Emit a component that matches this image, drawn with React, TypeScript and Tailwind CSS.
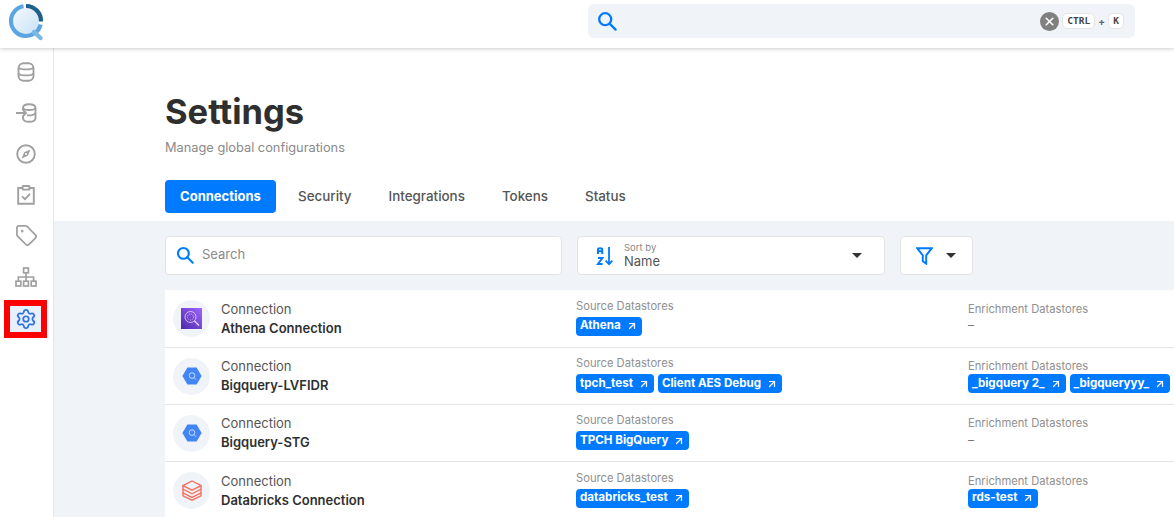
import { ArrowUpRight, Settings, Tag, X } from "lucide-react";

const font = { fontFamily: '"Inter", "Noto Sans", sans-serif' };
const mono = { fontFamily: '"DejaVu Sans Mono", monospace' };

function LogoMark() {
  return (
    <svg width="38" height="40" viewBox="0 0 38 40" fill="none">
      <defs>
        <linearGradient id="lg" x1="0" y1="0" x2="1" y2="1">
          <stop offset="0" stopColor="#f3f9fe" />
          <stop offset="1" stopColor="#c9e1f6" />
        </linearGradient>
      </defs>
      <circle cx="19" cy="19" r="13" fill="url(#lg)" />
      <path d="M19 4 A15 15 0 0 1 34 19.5" stroke="#1f5f8b" strokeWidth="4.2" />
      <path d="M33.6 22.5 A15 15 0 1 1 16.5 4.2" stroke="#5ba6e0" strokeWidth="4.2" />
      <path d="M27 30 L33.5 36" stroke="#7ab8e8" strokeWidth="4.4" strokeLinecap="round" />
    </svg>
  );
}

function SearchGlyph({ size }: { size: number }) {
  return (
    <svg width={size} height={size} viewBox="0 0 20 20" fill="none" stroke="#007bff" strokeWidth="2.3">
      <circle cx="8.2" cy="8.2" r="6" />
      <path d="M12.6 12.6L18.6 18.6" strokeLinecap="round" />
    </svg>
  );
}

function SortIcon() {
  return (
    <svg width="18" height="20" viewBox="0 0 18 20" fill="none" stroke="#007bff">
      <path d="M2 8V3.2C2 1.8 6.2 1.8 6.2 3.2V8M2 5.2H6.2" strokeWidth="2" />
      <path d="M2 12H6.4L2 18H6.6" strokeWidth="2" />
      <path d="M13 1V18M9.6 14.6L13 18.2L16.4 14.6" strokeWidth="1.8" />
    </svg>
  );
}

function FilterIcon() {
  return (
    <svg width="17" height="18" viewBox="0 0 17 18" fill="none" stroke="#007bff" strokeWidth="1.9">
      <path d="M1.2 1.2H15.8L10.2 8.4V16.6L6.8 14.2V8.4Z" />
    </svg>
  );
}

function Caret() {
  return <span className="h-0 w-0 border-x-[5px] border-t-[5px] border-x-transparent border-t-[#333333]" />;
}

function AthenaIcon() {
  return (
    <svg width="21" height="21" viewBox="0 0 21 21" fill="none">
      <defs>
        <linearGradient id="ath" x1="0" y1="1" x2="1" y2="0">
          <stop offset="0" stopColor="#4d27a8" />
          <stop offset="1" stopColor="#a166ff" />
        </linearGradient>
      </defs>
      <rect width="21" height="21" fill="url(#ath)" />
      <circle cx="9.5" cy="9" r="5.5" stroke="#e6dcfa" strokeWidth="0.8" />
      <circle cx="9.5" cy="9" r="3" stroke="#e6dcfa" strokeWidth="0.8" strokeDasharray="1 1" />
      <path d="M13.5 13L18 17.5" stroke="#e6dcfa" strokeWidth="1.2" />
    </svg>
  );
}

function BigQueryIcon() {
  return (
    <svg width="20" height="18" viewBox="0 0 20 18" fill="none">
      <path d="M5.4 0.5H14.6L19.6 9L14.6 17.5H5.4L0.4 9Z" fill="#4285f4" />
      <circle cx="10" cy="8.6" r="2.8" stroke="#c5d9fb" strokeWidth="1" />
      <path d="M12 10.6L14 12.6" stroke="#c5d9fb" strokeWidth="1" />
    </svg>
  );
}

function DatabricksIcon() {
  return (
    <svg width="20" height="21" viewBox="0 0 20 21" fill="none" stroke="#f2715f" strokeWidth="1.4">
      <path d="M10 1L19 5.6L10 10.2L1 5.6Z" />
      <path d="M1 9.2L10 13.8L19 9.2" />
      <path d="M1 12.8L10 17.4L19 12.8" />
      <path d="M1 6V15.8L10 20.2L19 15.8V6" />
    </svg>
  );
}

const gray = "#a0a0a0";

function DbIcon() {
  return (
    <svg width="18" height="20" viewBox="0 0 18 20" fill="none" stroke={gray} strokeWidth="1.9">
      <rect x="1.5" y="1.2" width="15" height="17.6" rx="5" />
      <path d="M1.5 5.6C4 8 14 8 16.5 5.6M1.5 11.6C4 14 14 14 16.5 11.6" />
    </svg>
  );
}

function IngestIcon() {
  return (
    <svg width="22" height="20" viewBox="0 0 22 20" fill="none" stroke={gray} strokeWidth="1.9">
      <path d="M8 7V5C8 2.4 10.5 1.2 14 1.2S20.5 2.4 20.5 5V15C20.5 17.6 17.5 18.8 14 18.8S8 17.6 8 15V13" />
      <path d="M8 5C9 7.6 19.5 7.6 20.5 5M12 12.2C15 12.8 19.5 12 20.5 10" />
      <path d="M1 10H11M7.5 6.4L11 10L7.5 13.6" />
    </svg>
  );
}

function CompassIcon() {
  return (
    <svg width="20" height="20" viewBox="0 0 20 20" fill="none">
      <circle cx="10" cy="10" r="8.8" stroke={gray} strokeWidth="1.9" />
      <path d="M14.4 5.6L11.8 11.8L5.6 14.4L8.2 8.2Z" fill={gray} />
      <circle cx="10" cy="10" r="1" fill="#ffffff" />
    </svg>
  );
}

function ClipboardIcon() {
  return (
    <svg width="18" height="20" viewBox="0 0 18 20" fill="none" stroke={gray} strokeWidth="1.9">
      <path d="M5.5 3H1.2V18.8H16.8V3H12.5" />
      <rect x="5.6" y="1" width="6.8" height="3.6" rx="0.6" />
      <path d="M5 11.4L8 14.2L13 8.8" />
    </svg>
  );
}

function SitemapIcon() {
  return (
    <svg width="22" height="20" viewBox="0 0 22 20" fill="none" stroke={gray} strokeWidth="1.7">
      <rect x="8.6" y="1" width="4.8" height="4.8" />
      <rect x="1" y="14.2" width="4.8" height="4.8" />
      <rect x="8.6" y="14.2" width="4.8" height="4.8" />
      <rect x="16.2" y="14.2" width="4.8" height="4.8" />
      <path d="M11 5.8V14.2M3.4 14.2V10H18.6V14.2" />
    </svg>
  );
}

function Chip({ label }: { label: string }) {
  return (
    <span className="flex h-[19px] items-center gap-[5px] rounded-[4px] bg-[#007bff] px-1 text-[11.6px] font-bold text-white">
      {label}
      <ArrowUpRight size={12} strokeWidth={2.4} />
    </span>
  );
}

function Datastores({ title, items, enrich }: { title: string; items: string[]; enrich?: boolean }) {
  return (
    <div className={enrich ? "flex flex-col pb-[4px] pt-[3px]" : "flex flex-col pb-[4px]"}>
      <span className="text-[11.2px] leading-[16px] text-[#8f8f8f]">{title}</span>
      <div className={enrich ? "flex h-[19px] items-center gap-1" : "mt-[3px] flex h-[19px] items-center gap-1"}>
        {items.length === 0 ? <span className="-mt-[2px] text-[12px] text-[#777777]">–</span> : items.map((i) => <Chip key={i} label={i} />)}
      </div>
    </div>
  );
}

const rows = [
  { name: "Athena Connection", icon: <AthenaIcon />, src: ["Athena"], enr: [], h: "h-[58px]" },
  { name: "Bigquery-LVFIDR", icon: <BigQueryIcon />, src: ["tpch_test", "Client AES Debug"], enr: ["_bigquery 2_", "_bigqueryyy_"], h: "h-[57px]" },
  { name: "Bigquery-STG", icon: <BigQueryIcon />, src: ["TPCH BigQuery"], enr: [], h: "h-[57px]" },
  { name: "Databricks Connection", icon: <DatabricksIcon />, src: ["databricks_test"], enr: ["rds-test"], h: "h-[58px]" },
];

export default function App() {
  const sideIcons = [
    <DbIcon key="a" />,
    <IngestIcon key="b" />,
    <CompassIcon key="c" />,
    <ClipboardIcon key="d" />,
    <Tag key="e" size={23} strokeWidth={1.8} />,
    <SitemapIcon key="f" />,
  ];
  return (
    <div style={font} className="flex h-[517px] w-full flex-col overflow-hidden bg-white">
      <header className="relative z-10 flex h-[48px] shrink-0 items-center justify-between bg-white pb-[6px] pl-[7px] pr-[39px] shadow-[0_1px_4px_rgba(0,0,0,0.2)]">
        <span className="mt-[2px]"><LogoMark /></span>
        <div className="flex h-[34px] w-[547px] items-center justify-between rounded-[6px] bg-[#f0f4f8] pl-[9px] pr-[11px]">
          <SearchGlyph size={20} />
          <div className="flex items-center gap-[3px]">
            <span className="flex h-[19px] w-[19px] items-center justify-center rounded-full bg-[#808080]">
              <X size={13} strokeWidth={3} color="#ffffff" />
            </span>
            <span style={mono} className="flex h-[16px] w-[33px] items-center justify-center rounded-[5px] border border-[#e5e5e5] bg-white text-[9.5px] font-bold text-[#444444]">CTRL</span>
            <span className="text-[10px] font-bold text-[#666666]">+</span>
            <span style={mono} className="flex h-[16px] w-[16px] items-center justify-center rounded-[5px] border border-[#e5e5e5] bg-white text-[9.5px] font-bold text-[#444444]">K</span>
          </div>
        </div>
      </header>
      <div className="flex min-h-0 flex-1">
        <aside className="flex w-[54px] shrink-0 flex-col items-center gap-[16px] border-r border-[#e5e5e5] pr-px pt-[11px] text-[#a0a0a0]">
          {sideIcons.map((ic) => (
            <span key={ic.key} className="flex h-[25px] w-[25px] items-center justify-center">{ic}</span>
          ))}
          <span className="-ml-px -mt-[5px] flex h-[38px] w-[43px] items-center justify-center border-[6px] border-[#ff0000] bg-[#e8f0fb] text-[#2f6fe8]">
            <Settings size={22} strokeWidth={1.9} />
          </span>
        </aside>
        <main className="min-w-0 flex-1 overflow-hidden">
          <div className="h-[173px] pl-[111px] pt-[43px]">
            <h1 className="text-[34.5px] font-bold leading-[41px] text-[#2f2f2f]">Settings</h1>
            <p className="mt-[7px] text-[12.8px] leading-[18px] text-[#8a8a8a]">Manage global configurations</p>
            <nav className="mt-[23px] flex items-center text-[13.4px] font-medium text-[#555555]">
              <span className="flex h-[33px] w-[111px] items-center justify-center rounded-[4px] bg-[#007bff] text-[13px] font-bold text-white">Connections</span>
              <span className="ml-[22px]">Security</span>
              <span className="ml-[37px]">Integrations</span>
              <span className="ml-[37px]">Tokens</span>
              <span className="ml-[37px]">Status</span>
            </nav>
          </div>
          <div className="h-full bg-[#f0f4f8] pl-[111px] pt-[15px]">
            <div className="flex gap-[15px]">
              <div className="flex h-[39px] w-[397px] items-center gap-[8px] rounded-[4px] border border-[#e3e3e3] bg-white pb-px pl-[10px] text-[13px] text-[#8a8a8a]">
                <SearchGlyph size={18} />
                Search
              </div>
              <div className="flex h-[39px] w-[308px] items-center rounded-[4px] border border-[#e3e3e3] bg-white pl-[18px] pr-[22px]">
                <SortIcon />
                <div className="ml-[10px] flex flex-1 flex-col">
                  <span className="text-[9.5px] leading-[11px] text-[#8a8a8a]">Sort by</span>
                  <span className="text-[13px] leading-[16px] text-[#555555]">Name</span>
                </div>
                <Caret />
              </div>
              <div className="flex h-[39px] w-[73px] items-center gap-[13px] rounded-[4px] border border-[#e3e3e3] bg-white pl-[15px]">
                <FilterIcon />
                <Caret />
              </div>
            </div>
            <div className="mt-[15px] flex flex-col bg-white">
              {rows.map((r) => (
                <div key={r.name} className={`flex items-center border-b border-[#e5e5e5] pl-[8px] ${r.h}`}>
                  <span className="flex h-[37px] w-[37px] shrink-0 items-center justify-center rounded-full bg-[#f0f4f8]">{r.icon}</span>
                  <div className="ml-[11px] flex w-[355px] shrink-0 flex-col">
                    <span className="text-[13px] leading-[19px] text-[#555555]">Connection</span>
                    <span className="text-[13px] font-semibold leading-[19px] text-[#2f2f2f]">{r.name}</span>
                  </div>
                  <div className="w-[392px] shrink-0"><Datastores title="Source Datastores" items={r.src} /></div>
                  <Datastores title="Enrichment Datastores" items={r.enr} enrich />
                </div>
              ))}
            </div>
          </div>
        </main>
      </div>
    </div>
  );
}
